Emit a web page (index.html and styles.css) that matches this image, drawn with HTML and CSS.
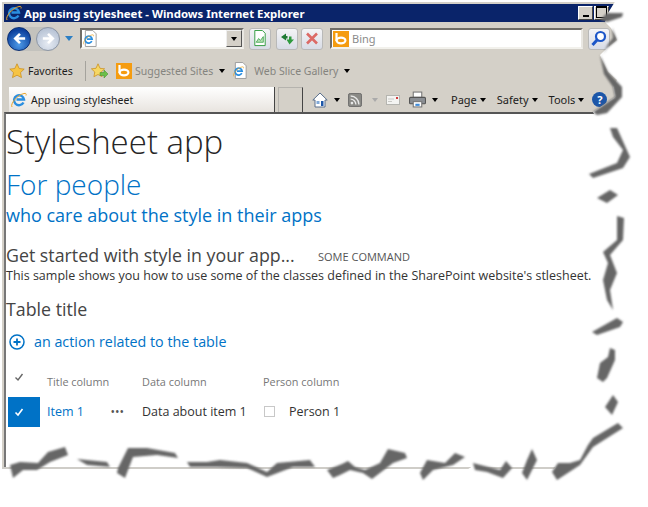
FILE: index.html
```html
<!DOCTYPE html>
<html lang="en">
  <head>
    <meta charset="UTF-8" />
    <title>App using stylesheet</title>
    <link rel="stylesheet" href="styles.css">
  </head>
  <body>
    <svg class="defs" width="0" height="0">
      <symbol id="ie" viewBox="0 0 16 16">
        <path d="M12.500 10.500A5 5 0 1 1 13 7.500H5.500" fill="none" stroke="#2a8ee0" stroke-width="2.400" />
        <path d="M1 15C-1 12 6 3 13 1.500c2-.5 2.500.5 2 2" fill="none" stroke="#e8a52c" stroke-width="1" />
      </symbol>
      <symbol id="bing" viewBox="0 0 16 16">
        <rect width="16" height="16" fill="#f59c10" />
        <path d="M3.500 2v8" stroke="#fff" stroke-width="2.200" />
        <ellipse cx="8" cy="9.500" rx="4.400" ry="2.800" fill="none" stroke="#fff" stroke-width="2.200" />
      </symbol>
      <symbol id="page" viewBox="0 0 16 18">
        <path d="M2.500.5h8l3.500 3.500v13.500H2.500z" fill="#fff" stroke="#9a9a9a" />
        <use href="#ie" x="0" y="4" width="12" height="12" />
      </symbol>
    </svg>

    <div class="window">
      <div class="titlebar">
        <svg class="title-icon"><use href="#ie" /></svg>
        <span class="title-text">App using stylesheet - Windows Internet Explorer</span>
        <span class="winbtn winbtn-min"></span>
        <span class="winbtn winbtn-max"></span>
      </div>

      <div class="navbar">
        <div class="nav-pill">
          <span class="nav-circle nav-back">
            <svg viewBox="0 0 16 16"><path d="M14 8H4M8.500 3 3.500 8l5 5" fill="none" stroke="#fff" stroke-width="2.800" /></svg>
          </span>
          <span class="nav-circle nav-forward">
            <svg viewBox="0 0 16 16"><path d="M2 8h10M7.500 3l5 5-5 5" fill="none" stroke="#fff" stroke-width="2.800" /></svg>
          </span>
        </div>
        <span class="nav-drop"></span>
        <div class="address">
          <svg class="address-icon"><use href="#page" /></svg>
          <span class="address-btn"><i class="caret"></i></span>
        </div>
        <span class="nav-btn">
          <svg viewBox="0 0 16 18"><path d="M2.500.5h8l3 3v13h-11z" fill="#fff" stroke="#2f9a3e" /><path d="M4 13l2.500-4 2 2 3-4v6z" fill="#b7e3b5" stroke="#2f9a3e" stroke-width=".8" /></svg>
        </span>
        <span class="nav-btn">
          <svg viewBox="0 0 16 16"><path d="M7 3 2 6.500 7 10V8h1.500V5.500H7z" fill="#1f7a33" /><path d="M10.500 14l4.500-5h-2.500V6h-2.500v3H7.500z" fill="#2f9a3e" /></svg>
        </span>
        <span class="nav-btn">
          <svg viewBox="0 0 16 16"><path d="M3 3l10 10M13 3 3 13" stroke="#dc6a66" stroke-width="2.600" /></svg>
        </span>
        <div class="search">
          <svg class="search-logo"><use href="#bing" /></svg>
          <span class="search-text">Bing</span>
        </div>
        <span class="nav-btn nav-go">
          <svg viewBox="0 0 16 16"><circle cx="9.500" cy="6" r="4.500" fill="#fff" stroke="#1c56c8" stroke-width="2.200" /><path d="M6.500 9 1.500 14.500" stroke="#1c56c8" stroke-width="3" /></svg>
        </span>
      </div>

      <div class="favbar">
        <svg class="fav-star" viewBox="0 0 16 16"><path d="M8 .8l2.200 4.700 5 .6-3.700 3.500 1 5L8 12.200l-4.500 2.400 1-5L.8 6.100l5-.6z" fill="#f6c445" stroke="#c98a16" stroke-width=".7" /></svg>
        <span class="fav-label">Favorites</span>
        <span class="fav-sep"></span>
        <svg class="fav-add" viewBox="0 0 18 16"><path d="M7 .8l2 4.500 4.600.5-3.400 3.200.9 4.700L7 11.500l-4.100 2.200.9-4.700L.4 5.800 5 5.300z" fill="#f6d765" stroke="#c98a16" stroke-width=".7" /><path d="M9 9.500h4V7l4 4-4 4v-2.500H9z" fill="#6cc04a" stroke="#3f8a2a" stroke-width=".5" /></svg>
        <svg class="fav-site"><use href="#bing" /></svg>
        <span class="fav-link">Suggested Sites</span>
        <i class="caret fav-caret"></i>
        <svg class="fav-page"><use href="#page" /></svg>
        <span class="fav-link">Web Slice Gallery</span>
        <i class="caret fav-caret"></i>
      </div>

      <div class="tabbar">
        <div class="tab">
          <svg class="tab-icon"><use href="#ie" /></svg>
          <span>App using stylesheet</span>
        </div>
        <div class="tab-new"></div>
        <div class="tools">
          <svg class="tool-icon" viewBox="0 0 16 16"><path d="M8 1 .8 8H3v7h10V8h2.200z" fill="#fff" stroke="#5a6f8c" /><rect x="9" y="9" width="2.500" height="5" fill="#1c56a8" /><rect x="4.500" y="9" width="3" height="3" fill="#7fa8d8" /></svg>
          <i class="caret tool-caret"></i>
          <svg class="tool-rss" viewBox="0 0 16 16"><rect x=".5" y=".5" width="15" height="15" rx="2" fill="#8a8a86" stroke="#666" /><circle cx="4.500" cy="11.500" r="1.500" fill="#e8e8e8" /><path d="M3 7a6 6 0 0 1 6 6M3 3.500A9.500 9.500 0 0 1 12.500 13" fill="none" stroke="#e8e8e8" stroke-width="1.600" /></svg>
          <i class="caret tool-caret tool-caret-off"></i>
          <svg class="tool-mail" viewBox="0 0 14 10"><rect x=".5" y=".5" width="13" height="9" fill="#f4f4f2" stroke="#b5b5b0" /><rect x="10" y="2" width="2" height="2" fill="#d23b3b" /><path d="M2 4h6M2 6.500h4" stroke="#c9c9c5" /></svg>
          <svg class="tool-print" viewBox="0 0 16 16"><rect x="4" y="1" width="8" height="5" fill="#fff" stroke="#777" /><rect x=".5" y="6" width="15" height="6" rx="1" fill="#8b8f94" stroke="#555" /><rect x="4" y="10" width="8" height="5" fill="#fff" stroke="#777" /><rect x="6" y="12" width="4" height="2" fill="#3f8ad8" /></svg>
          <i class="caret tool-caret print-caret"></i>
          <span class="tool-menu">Page</span><i class="caret menu-caret"></i>
          <span class="tool-menu">Safety</span><i class="caret menu-caret"></i>
          <span class="tool-menu">Tools</span><i class="caret menu-caret"></i>
          <span class="help">?</span>
        </div>
      </div>

      <div class="content">
        <h1 class="page-title">Stylesheet app</h1>
        <h2 class="page-sub">For people</h2>
        <h3 class="page-sub2">who care about the style in their apps</h3>

        <div class="started">
          <span class="started-text">Get started with style in your app...</span>
          <span class="command">SOME COMMAND</span>
        </div>
        <p class="intro">This sample shows you how to use some of the classes defined in the SharePoint website's stlesheet.</p>

        <h3 class="table-title">Table title</h3>
        <div class="action">
          <svg class="action-icon" viewBox="0 0 16 16"><circle cx="8" cy="8" r="7" fill="none" stroke="#0072c6" stroke-width="1.500" /><path d="M8 4.500v7M4.500 8h7" stroke="#0072c6" stroke-width="1.800" /></svg>
          <span>an action related to the table</span>
        </div>

        <div class="list">
          <div class="list-head">
            <span class="cell-check">
              <svg class="check" viewBox="0 0 10 10"><path d="M1.500 5.500 4 8l4.500-6" fill="none" stroke="#666" stroke-width="1.400" /></svg>
            </span>
            <span class="cell-title">Title column</span>
            <span class="cell-data">Data column</span>
            <span class="cell-person">Person column</span>
          </div>
          <div class="list-row">
            <span class="cell-check cell-selected">
              <svg class="check" viewBox="0 0 10 10"><path d="M1.500 5.500 4 8l4.500-6" fill="none" stroke="#fff" stroke-width="1.600" /></svg>
            </span>
            <span class="cell-title item-link">Item 1<span class="dots">&bull;&bull;&bull;</span></span>
            <span class="cell-data">Data about item 1</span>
            <span class="cell-person"><i class="box"></i>Person 1</span>
          </div>
        </div>
      </div>
    </div>

    <!-- torn screenshot edge, lies over the window -->
    <svg class="torn" viewBox="0 0 648 507">
      <defs>
        <filter id="soft" x="-10%" y="-10%" width="120%" height="120%">
          <feGaussianBlur stdDeviation="1.100" />
        </filter>
      </defs>
      <path fill="#fff" d="M648 0H616L608 13 605 22 611 28 617 40 607 48 600 55 603 62 608 72 617 80 613 87 615 97 593 112 600 125 648 125z" />
      <path fill="#fff" d="M648 420 618 423 593 438 588 445 580 460 570 463 558 463 552 472 527 474 512 470 503 472 487 472 473 466 465 471 433 471 420 473 407 471 393 471 372 471 360 471 340 471 327 471 315 471 0 471V507H648z" />
      <g fill="#666" filter="url(#soft)">
        <path d="M607 13 623 13 622 17 607 22 600 20z" />
        <path d="M612 28 617 40 607 48 603 54 608 44 613 38z" />
        <path d="M600 55 608 72 622 87 622 97 607 113 597 115 593 112 615 97 613 87 604 74z" />
        <path d="M610 128 617 128 630 157 623 168 593 178 589 174 617 163 623 150 613 137z" />
        <path d="M597 198 610 190 618 195 607 203z" />
        <path d="M617 216 624 218 623 240 610 255 617 273 610 290 613 310 607 300 603 280 608 263 603 252 617 240z" />
        <path d="M592 332 617 318 623 322 620 327 597 335z" />
        <path d="M610 348 615 350 615 360 607 378 603 382 597 378 600 363 608 357z" />
        <path d="M613 395 618 402 612 415 605 407z" />
        <path d="M618 423 623 428 593 447 580 465 557 480 552 472 558 463 570 463 580 460 588 445 593 438z" />
        <path d="M532 449 537 460 527 480 522 473 527 460z" />
        <path d="M473 463 500 470 506 461 512 468 503 478 487 472 475 470z" />
        <path d="M427 460 445 463 455 453 465 457 453 465 433 470 423 480 420 473z" />
        <path d="M340 465 348 461 355 467 365 470 380 463 388 449 405 453 407 458 393 463 372 479 363 473 350 470 340 475 333 478 327 470 347 462z" />
        <path d="M187 462 207 462 220 460 247 463 267 472 277 463 310 460 315 467 293 467 267 477 247 468 217 467 190 467z" />
        <path d="M118 468 128 448 147 448 175 453 178 458 157 455 133 457 125 478 117 473z" />
        <path d="M77 459 87 460 107 462 110 467 87 465z" />
        <path d="M10 465 20 462 38 463 48 452 65 447 68 455 50 462 37 470 23 470 13 478z" />
      </g>
    </svg>
  </body>
</html>
```

FILE: styles.css
```css
* {
  box-sizing: border-box;
}

html,
body {
  margin: 0;
  height: 507px;
  overflow: hidden;
  background: #fff;
}

body {
  padding: 2px 0 0 2px;
  position: relative;
  font-family: "Liberation Sans", sans-serif;
}

.defs {
  position: absolute;
}

.window {
  width: 625px;
  height: 467px;
  display: flex;
  flex-direction: column;
  background: #d4d0c8;
  padding: 2px 0 0 2px;
  border-bottom: 2px solid #cfcdc8;
}

/* title bar */
.titlebar {
  height: 18px;
  background: #0a246a;
  display: flex;
  align-items: center;
  color: #fff;
  padding-right: 18px;
}

.title-icon {
  width: 16px;
  height: 16px;
  margin: 0 2px 0 2px;
}

.title-text {
  font-family: "Noto Sans", sans-serif;
  font-weight: bold;
  font-size: 11.400px;
  flex: 1;
  white-space: nowrap;
}

.winbtn {
  width: 15px;
  height: 14px;
  background: #d4d0c8;
  border: 1px solid #fff;
  border-right-color: #444;
  border-bottom-color: #444;
  display: flex;
  align-items: flex-end;
  justify-content: center;
  padding-bottom: 2px;
}

.winbtn-min::after {
  content: "";
  width: 6px;
  height: 2px;
  background: #000;
}

.winbtn-max {
  margin-left: 1px;
  padding-bottom: 1px;
}

.winbtn-max::after {
  content: "";
  width: 9px;
  height: 9px;
  border: 1px solid #000;
  border-top-width: 2px;
}

/* nav row */
.navbar {
  height: 33px;
  display: flex;
  align-items: center;
  padding-left: 3px;
}

.nav-pill {
  display: flex;
  gap: 5px;
  background: #c3c2bd;
  border-radius: 13px;
}

.nav-circle {
  width: 24px;
  height: 24px;
  border-radius: 50%;
  display: flex;
  align-items: center;
  justify-content: center;
}

.nav-circle svg {
  width: 15px;
  height: 15px;
}

.nav-back {
  background: radial-gradient(circle at 50% 75%, #4d9ae8, #0b3f9c 75%);
  border: 1px solid #0c2f73;
}

.nav-forward {
  background: radial-gradient(circle at 50% 70%, #e6ebf3, #b6c2d4 80%);
  border: 1px solid #8d97a6;
}

.nav-drop {
  width: 0;
  height: 0;
  margin: 0 7px 0 5px;
  border: 4.500px solid transparent;
  border-top: 5px solid #2c7fc4;
  border-bottom: 0;
}

.address {
  width: 164px;
  height: 21px;
  background: #fff;
  border: 2px solid #6f6d68;
  border-right-color: #e9e7e2;
  border-bottom-color: #f2f1ec;
  display: flex;
  align-items: center;
  justify-content: space-between;
  padding-left: 1px;
}

.address-icon {
  width: 15px;
  height: 17px;
}

.address-btn {
  width: 16px;
  height: 17px;
  background: #d4d0c8;
  border: 1px solid #eee;
  border-right-color: #555;
  border-bottom-color: #555;
  display: flex;
  align-items: center;
  justify-content: center;
}

.caret {
  display: inline-block;
  width: 0;
  height: 0;
  border: 3px solid transparent;
  border-top: 4px solid #000;
  border-bottom: 0;
}

.nav-btn {
  width: 22px;
  height: 22px;
  margin-left: 5px;
  background: linear-gradient(#f4f4f6, #d8dce6);
  border: 1px solid #b9b9b8;
  border-radius: 3px;
  display: flex;
  align-items: center;
  justify-content: center;
}

.nav-btn svg {
  width: 16px;
  height: 17px;
}

.nav-btn:nth-of-type(4) {
  margin-left: 3px;
}

.search {
  width: 253px;
  height: 21px;
  margin-left: 7px;
  background: #fff;
  border: 2px solid #6f6d68;
  border-right-color: #e9e7e2;
  border-bottom-color: #f2f1ec;
  display: flex;
  align-items: center;
  font-family: "Noto Sans", sans-serif;
  font-size: 11px;
  color: #8b8b8b;
}

.search-logo {
  width: 16px;
  height: 16px;
  margin: 0 3px 0 1px;
}

/* favorites row */
.favbar {
  height: 31px;
  display: flex;
  align-items: center;
  padding-left: 5px;
  font-family: "Noto Sans", sans-serif;
  font-size: 10.500px;
  white-space: nowrap;
}

.fav-star {
  width: 16px;
  height: 16px;
  margin-right: 3px;
}

.fav-label {
  color: #1c1c1c;
  width: 54px;
}

.fav-sep {
  width: 1px;
  height: 20px;
  background: #a5a39d;
  margin: 0 5px 0 3px;
}

.fav-add {
  width: 18px;
  height: 16px;
  margin-right: 7px;
}

.fav-site {
  width: 16px;
  height: 16px;
  margin-right: 3px;
}

.fav-page {
  width: 15px;
  height: 17px;
  margin-right: 6px;
}

.fav-link {
  color: #85847f;
}

.fav-caret {
  margin: 0 8px 0 6px;
}

/* tab row */
.tabbar {
  height: 26px;
  display: flex;
  align-items: flex-end;
  padding-left: 5px;
  font-family: "Noto Sans", sans-serif;
  font-size: 10.500px;
  color: #1c1c1c;
  white-space: nowrap;
}

.tab {
  width: 266px;
  height: 25px;
  background: linear-gradient(#fff, #e8e4df);
  border-right: 1px solid #444;
  display: flex;
  align-items: center;
  gap: 4px;
  padding-left: 2px;
}

.tab-icon {
  width: 16px;
  height: 16px;
}

.tab-new {
  width: 25px;
  height: 25px;
  margin-left: 3px;
  background: #d4d0c8;
  border: 1px solid #b5b3ae;
  border-right-color: #444;
  border-bottom: 0;
}

.tools {
  display: flex;
  align-items: center;
  height: 25px;
  margin-left: 9px;
}

.tool-icon {
  width: 16px;
  height: 16px;
}

.tool-caret {
  margin: 0 8px 0 6px;
}

.tool-caret-off {
  border-top-color: #aaa;
  margin-left: 10px;
}

.print-caret {
  margin-right: 13px;
}

.tool-rss {
  width: 14px;
  height: 14px;
}

.tool-mail {
  width: 14px;
  height: 10px;
  margin-right: 9px;
}

.tool-print {
  width: 17px;
  height: 17px;
}

.tool-menu {
  font-size: 11px;
}

.menu-caret {
  margin: 0 11px 0 3px;
}

.help {
  width: 15px;
  height: 15px;
  margin-left: -3px;
  border-radius: 50%;
  background: #1c56a8;
  color: #fff;
  font-size: 11px;
  font-weight: bold;
  text-align: center;
  line-height: 15px;
}

/* page content */
.content {
  flex: 1;
  background: #fff;
  border-top: 2px solid #555;
  border-left: 2px solid #777;
  font-family: "Open Sans", sans-serif;
  color: #333;
}

.page-title {
  margin: 4px 0 0;
  font-size: 33px;
  line-height: 48px;
  font-weight: 300;
  color: #262626;
}

.page-sub {
  margin: 0;
  font-size: 28px;
  line-height: 37px;
  font-weight: 300;
  color: #0072c6;
}

.page-sub2 {
  margin: 0;
  font-size: 18px;
  line-height: 25px;
  font-weight: 400;
  color: #0072c6;
}

.started {
  margin-top: 15px;
  display: flex;
  align-items: flex-end;
}

.started-text {
  width: 312px;
  font-size: 17.800px;
  line-height: 24px;
  font-weight: 400;
  color: #444;
}

.command {
  font-size: 11px;
  line-height: 21px;
  color: #555;
}

.intro {
  margin: 1px 0 0;
  font-size: 12.500px;
  line-height: 16px;
  color: #333;
  white-space: nowrap;
}

.table-title {
  margin: 13px 0 0;
  font-size: 17.800px;
  line-height: 24px;
  font-weight: 400;
  color: #444;
}

.action {
  margin-top: 11px;
  display: flex;
  align-items: center;
  gap: 9px;
  padding-left: 3px;
  font-size: 14.300px;
  line-height: 20px;
  color: #0072c6;
}

.action-icon {
  width: 16px;
  height: 16px;
}

.list {
  margin-top: 15px;
  font-size: 12.500px;
}

.list-head,
.list-row {
  display: grid;
  grid-template-columns: 32px 102px 121px 1fr;
  align-items: center;
  padding-left: 2px;
}

.list-head {
  height: 30px;
  color: #777;
  font-size: 10.900px;
}

.list-row {
  height: 30px;
}

.cell-title,
.cell-data,
.cell-person {
  padding-bottom: 2px;
}

.cell-title {
  padding-left: 7px;
}

.cell-check {
  display: flex;
  justify-content: center;
  align-items: center;
  height: 100%;
}

.list-head .cell-check {
  width: 22px;
  padding-bottom: 10px;
}

.check {
  width: 10px;
  height: 10px;
}

.cell-selected {
  background: #0072c6;
  padding-right: 10px;
}

.item-link {
  color: #0072c6;
  display: flex;
  align-items: center;
  justify-content: space-between;
  padding-right: 18px;
}

.dots {
  color: #555;
  font-size: 12px;
}

.cell-person {
  display: flex;
  align-items: center;
}

.box {
  width: 11px;
  height: 11px;
  margin: 0 14px 0 1px;
  border: 1px solid #c8c8c8;
}

.torn {
  position: absolute;
  left: 0;
  top: 0;
  width: 648px;
  height: 507px;
}
```
